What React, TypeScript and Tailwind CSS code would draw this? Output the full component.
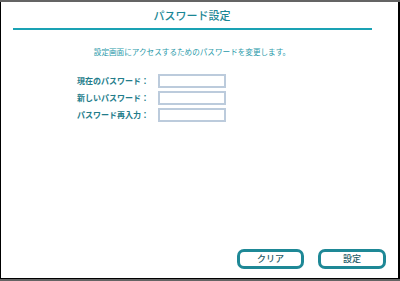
const fields = ["現在のパスワード：", "新しいパスワード：", "パスワード再入力："]

export default function App() {
  return (
    <div
      className="flex h-[281px] w-[400px] flex-col border-y-2 border-[#646464] bg-white"
      style={{ fontFamily: '"Noto Sans CJK JP", "Noto Sans", sans-serif' }}
    >
      <div className="flex flex-1 flex-col border-b border-l border-r-2 border-black">
        <div className="w-[382px]">
          {/* Title */}
          <div className="flex h-[26px] items-center justify-center text-[11px] font-medium text-[#1b8795]">
            パスワード設定
          </div>
          <div className="ml-[12px] h-[2px] w-[359px] bg-[#1aa2b4]" />

          {/* Description */}
          <p className="mt-[16px] text-center text-[7.6px] leading-[12px] text-[#2a9aaa]">
            設定画面にアクセスするためのパスワードを変更します。
          </p>
        </div>

        {/* Form */}
        <div className="mt-[16px] flex flex-col gap-[3px]">
          {fields.map((label) => (
            <div key={label} className="flex items-center gap-[9px] pl-[68px]">
              <span className="w-[80px] text-right text-[8px] font-bold leading-[14px] text-[#237c8a]">
                {label}
              </span>
              <input
                type="password"
                className="h-[14px] w-[68px] border-2 border-[#bccbdc] bg-white outline-none"
              />
            </div>
          ))}
        </div>

        {/* Buttons */}
        <div className="mt-auto flex justify-end gap-[14px] pb-[9px] pr-[12px]">
          <button className="flex h-[20px] w-[67px] items-center justify-center rounded-[7px] border-[3px] border-[#1e8896] bg-white text-[9px] font-medium text-[#1d5a66]">
            クリア
          </button>
          <button className="flex h-[20px] w-[68px] items-center justify-center rounded-[7px] border-[3px] border-[#1e8896] bg-white text-[9px] font-medium text-[#1d5a66]">
            設定
          </button>
        </div>
      </div>
    </div>
  )
}
